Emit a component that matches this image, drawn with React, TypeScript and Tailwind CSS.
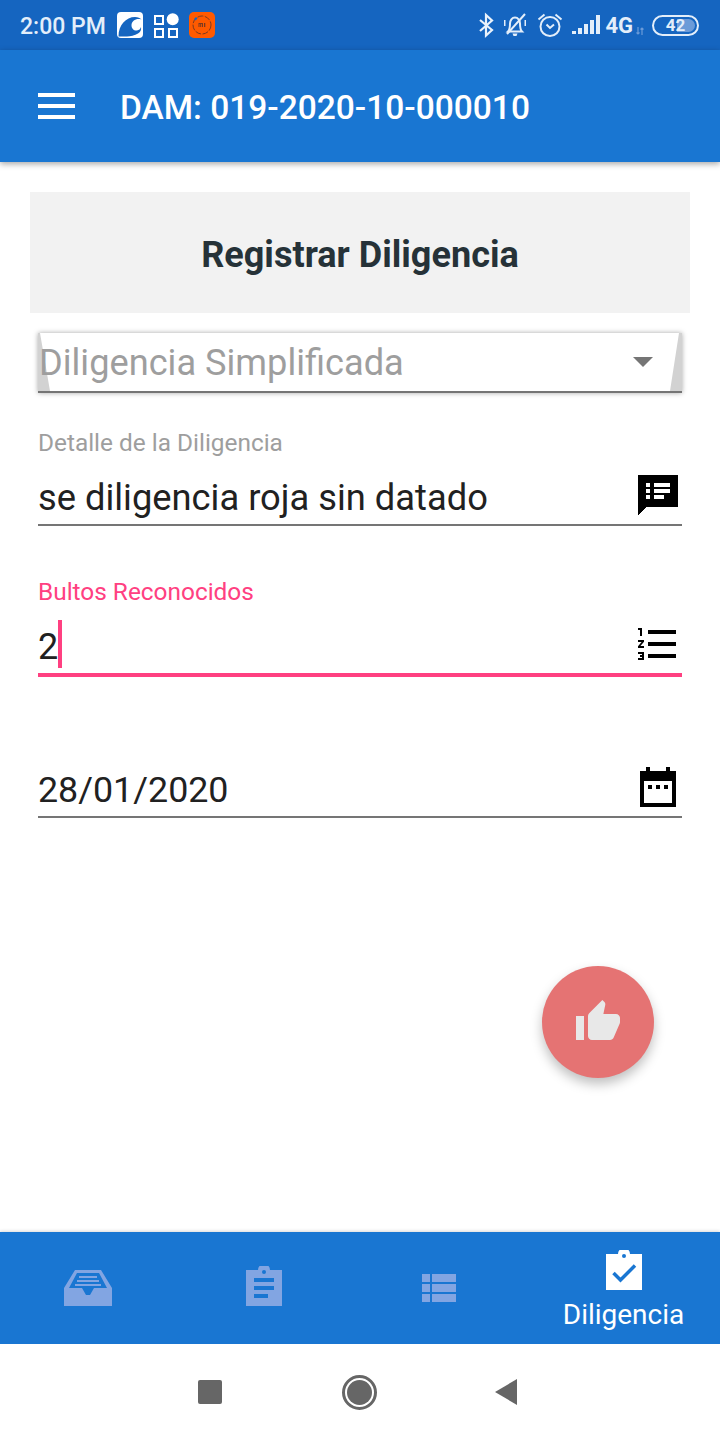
import React from "react";

const Wave = () => (
  <svg width="26" height="26" viewBox="0 0 26 26">
    <rect width="26" height="26" rx="4" fill="#fff" />
    <path d="M1.500 24.500C1.500 13 9 5 18 5c3 0 5 1 6.500 2.500-5-1.500-10 1-10 6 0 3 2.500 5.500 5.500 5 2-.3 3.500-1.500 4-3.500.5 2.500-.5 5-3 6.500-3 2-8 3-11 3z" fill="#1565c0" />
  </svg>
);

const Apps = () => (
  <svg width="26" height="26" viewBox="0 0 26 26">
    <g fill="none" stroke="#fff" strokeWidth="2">
      <rect x="1" y="4" width="8" height="8" />
      <rect x="1" y="17" width="8" height="8" />
      <rect x="15" y="17" width="8" height="8" />
    </g>
    <circle cx="18.700" cy="7.300" r="6" fill="#fff" />
  </svg>
);

const MiIcon = () => (
  <svg width="26" height="26" viewBox="0 0 26 26">
    <rect width="26" height="26" rx="5" fill="#ff5a00" />
    <circle cx="13" cy="13" r="9" fill="none" stroke="#7a3a20" strokeWidth="1" strokeDasharray="6 1.500" />
    <path d="M5 7l2-2 1.500 1.500-2 2z" fill="#1565c0" />
    <path d="M9.500 11h4.500v4h-1v-3h-.8v3h-1v-3h-.7v3h-1zm5.500 0h1.300v4H15z" fill="#7a3a20" />
  </svg>
);

const StatusRight = () => (
  <div className="flex items-center">
    <svg width="16" height="26" viewBox="0 0 16 26" className="mr-[9px]">
      <path d="M2 8l12 10-6 5.500V3l6 5.500L2 19" fill="none" stroke="#eaf2fb" strokeWidth="2.200" />
    </svg>
    <svg width="24" height="26" viewBox="0 0 24 26" className="mr-[10px]">
      <path d="M5 19.500h14c-2-2-2-5-2-8 0-3-2-6-5-6s-5 3-5 6c0 3 0 6-2 8z" fill="none" stroke="#e3eefa" strokeWidth="2" />
      <path d="M9.500 21.500h5l-1 2.500h-3zM1 8v6h1.500V8zM21.500 8v6H23V8z" fill="#e3eefa" />
      <path d="M4 22L22 2" stroke="#e3eefa" strokeWidth="2" />
    </svg>
    <svg width="26" height="26" viewBox="0 0 26 26" className="mr-[8px]">
      <circle cx="13" cy="14.500" r="9.500" fill="none" stroke="#e3eefa" strokeWidth="2" />
      <path d="M9.500 12.500l3.500 3.500 4-3.500M1.500 7.500l6-5M24.500 7.500l-6-5" fill="none" stroke="#e3eefa" strokeWidth="2" />
    </svg>
    <svg width="29" height="26" viewBox="0 0 29 26" className="mr-[5px]">
      <path d="M1 22h4v-3H1zM7 22h4v-6H7zM13 22h4v-10h-4zM19 22h4V8h-4zM25 22h4V3h-4z" fill="#e3eefa" />
    </svg>
    <span className="text-[22px] leading-[26px] font-bold text-[#e3eefa] pt-[2px]">4G</span>
    <svg width="10" height="10" viewBox="0 0 10 10" className="mt-[12px] ml-[2px] mr-[7px]">
      <path d="M3 1v7M1.500 6.500L3 8l1.500-1.500M7 9V2M5.500 3.500L7 2l1.500 1.500" fill="none" stroke="#6c9bd8" strokeWidth="1.200" />
    </svg>
    <div className="relative flex h-[21px] w-[47px] items-center justify-center overflow-hidden rounded-full border-2 border-[#e3eefa]">
      <div className="absolute inset-y-[2px] right-[2px] w-[18px] rounded-r-full bg-[#6c9bd8]" />
      <span className="relative text-[17px] font-bold leading-[18px] text-[#e3eefa]">42</span>
    </div>
  </div>
);

const Notes = () => (
  <svg width="48" height="48" viewBox="0 0 24 24" shapeRendering="crispEdges">
    <path fillRule="evenodd" d="M2 2h20v16H6l-4 4zM6 6v2h2V6zM10 6v2h8V6zM6 9v2h2V9zM10 9v2h8V9zM6 12v2h2v-2zM10 12v2h5v-2z" fill="#000" />
  </svg>
);

const Numbered = () => (
  <svg width="48" height="48" viewBox="0 0 24 24">
    <path d="M2 17h2v.5H3v1h1v.5H2v1h3v-4H2zm1-9h1V4H2v1h1v3zm-1 3h1.800L2 13.100v.9h3v-1H3.200L5 10.900V10H2v1zm5-6v2h14V5H7zm0 14h14v-2H7v2zm0-6h14v-2H7v2z" fill="#000" />
  </svg>
);

const Calendar = () => (
  <svg width="48" height="48" viewBox="0 0 48 48" shapeRendering="crispEdges">
    <path fillRule="evenodd" d="M12 4h4v4h16V4h4v4h6v36H6V8h6zM10 18v22h28V18zM14 22h4v4h-4zM22 22h4v4h-4zM30 22h4v4h-4z" fill="#000" />
  </svg>
);

const Tray = () => (
  <svg width="48" height="36" viewBox="0 0 48 36">
    <path fillRule="evenodd" fill="#82a5e2" d="M11 0h26l11 18v18H0V18zM13 3L5 18h13l4 7h4.500 0H26l4-7h13L35 3z" />
    <path d="M15 6h18v2H15zM13 10h22v2H13zM11 14h26v2H11z" fill="#82a5e2" />
  </svg>
);

const Clipboard = ({ color, children }: { color: string; children: React.ReactNode }) => (
  <svg width="36" height="40" viewBox="0 0 36 40">
    <path d="M0 4h12a6 6 0 0 1 12 0h12v36H0z" fill={color} />
    <circle cx="18" cy="6" r="2" fill="#1976d2" />
    {children}
  </svg>
);

const ViewList = () => (
  <svg width="34" height="28" viewBox="0 0 34 28" shapeRendering="crispEdges">
    <path d="M0 0h8v8H0zM10 0h24v8H10zM0 10h8v8H0zM10 10h24v8H10zM0 20h8v8H0zM10 20h24v8H10z" fill="#82a5e2" />
  </svg>
);

function Field({ children, icon, line, size }: { children: React.ReactNode; icon: React.ReactNode; line: string; size: string }) {
  return (
    <div className={line}>
      <div className="flex h-[52px] items-end justify-between">
        <div className={`flex h-[52px] items-center leading-[52px] text-[#212121] ${size}`}>{children}</div>
        <div className="mb-[5px] h-[48px] w-[48px]">{icon}</div>
      </div>
    </div>
  );
}

export default function App() {
  return (
    <div className="relative flex h-[1440px] w-[720px] flex-col overflow-hidden bg-white [font-family:Roboto,sans-serif]">
      <div className="flex h-[50px] items-center justify-between bg-[#1565c0] pl-[20px] pr-[21px]">
        <div className="flex items-center">
          <span className="mr-[11px] pt-[3px] text-[23px] leading-[26px] font-medium text-[#e3eefa]">2:00 PM</span>
          <Wave />
          <div className="ml-[11px] mr-[9px]"><Apps /></div>
          <MiIcon />
        </div>
        <StatusRight />
      </div>

      <header className="z-10 flex h-[112px] items-center bg-[#1976d2] pl-[38px] shadow-[0_2px_6px_rgba(0,0,0,0.35)]">
        <div className="mr-[45px] flex w-[37px] flex-col gap-[7px]">
          <div className="h-[4px] bg-white" />
          <div className="h-[4px] bg-white" />
          <div className="h-[4px] bg-white" />
        </div>
        <h1 className="pt-[4px] text-[33.500px] font-medium text-white">DAM: 019-2020-10-000010</h1>
      </header>

      <main className="relative flex-1 px-[30px] pt-[30px]">
        <div className="flex h-[121px] items-center justify-center bg-[#f2f2f2]">
          <h2 className="pt-[6px] text-[36.100px] font-bold text-[#263238]">Registrar Diligencia</h2>
        </div>

        <div className="mx-[8px]">
          <div className="relative mt-[20px] flex h-[60px] items-center justify-between border-b-2 border-[#757575] pl-[1px] pr-[29px] shadow-[0_0_5px_rgba(0,0,0,0.35)]">
            <svg width="644" height="58" viewBox="0 0 644 58" className="absolute left-0 top-0">
              <path d="M0 0h2l10 58H0zM644 0h-3l-9 58h12z" fill="#d2d2d2" />
            </svg>
            <span className="relative pt-[2px] text-[36.200px] text-[#9e9e9e]">Diligencia Simplificada</span>
            <svg width="20" height="10" viewBox="0 0 20 10" className="relative">
              <path d="M0 0h20L10 10z" fill="#757575" />
            </svg>
          </div>

          <div className="mt-[35px] h-[30px] text-[24.400px] leading-[30px] text-[#9e9e9e]">Detalle de la Diligencia</div>
          <div className="mt-[14px]">
            <Field size="text-[36.300px]" line="border-b-2 border-[#757575]" icon={<Notes />}>se diligencia roja sin datado</Field>
          </div>

          <div className="mt-[51px] h-[30px] text-[24.400px] leading-[30px] text-[#ff4081]">Bultos Reconocidos</div>
          <div className="mt-[14px]">
            <Field size="text-[36px]" line="border-b-4 border-[#ff4081]" icon={<Numbered />}>
              2<span className="mb-[6px] h-[48px] w-[4px] bg-[#ff4081]" />
            </Field>
          </div>

          <div className="mt-[87px]">
            <Field size="text-[35.800px]" line="border-b-2 border-[#757575]" icon={<Calendar />}>28/01/2020</Field>
          </div>
        </div>

        <button className="absolute left-[542px] top-[804px] flex h-[112px] w-[112px] items-center justify-center rounded-full bg-[#e57373] shadow-[0_6px_12px_rgba(0,0,0,0.25)]">
          <svg width="48" height="48" viewBox="0 0 24 24">
            <path d="M1 21h4V9H1v12zm22-11c0-1.100-.9-2-2-2h-6.310l.95-4.570.03-.32c0-.41-.17-.79-.44-1.060L14.170 1 7.590 7.590C7.220 7.950 7 8.450 7 9v10c0 1.100.9 2 2 2h9c.83 0 1.540-.5 1.840-1.220l3.020-7.050c.09-.23.14-.47.14-.73v-2z" fill="#e8e8e8" />
          </svg>
        </button>
      </main>

      <nav className="flex h-[112px] bg-[#1976d2] shadow-[0_-1px_3px_rgba(0,0,0,0.15)]">
        <div className="flex flex-1 justify-center pt-[38px]"><Tray /></div>
        <div className="flex flex-1 justify-center pt-[34px]">
          <Clipboard color="#82a5e2">
            <path d="M8 12h20v4H8zM8 20h20v4H8zM8 28h14v4H8z" fill="#1976d2" />
          </Clipboard>
        </div>
        <div className="flex flex-1 justify-center pt-[42px]"><ViewList /></div>
        <div className="flex w-[193px] flex-col items-center pt-[18px]">
          <Clipboard color="#ffffff">
            <path d="M7.500 23l7 7L29 15.500" fill="none" stroke="#1976d2" strokeWidth="3.500" />
          </Clipboard>
          <span className="mt-[10px] text-[28px] leading-[30px] text-white">Diligencia</span>
        </div>
      </nav>

      <div className="flex h-[96px] items-center justify-center bg-white pr-[6px]">
        <div className="h-[24px] w-[24px] rounded-[2px] bg-[#666666]" />
        <div className="ml-[120px] flex h-[35px] w-[35px] items-center justify-center rounded-full border-[3px] border-[#666666]">
          <div className="h-[25px] w-[25px] rounded-full bg-[#666666]" />
        </div>
        <svg width="22" height="26" viewBox="0 0 22 26" className="ml-[118px]">
          <path d="M22 0v26L0 13z" fill="#666666" />
        </svg>
      </div>
    </div>
  );
}
